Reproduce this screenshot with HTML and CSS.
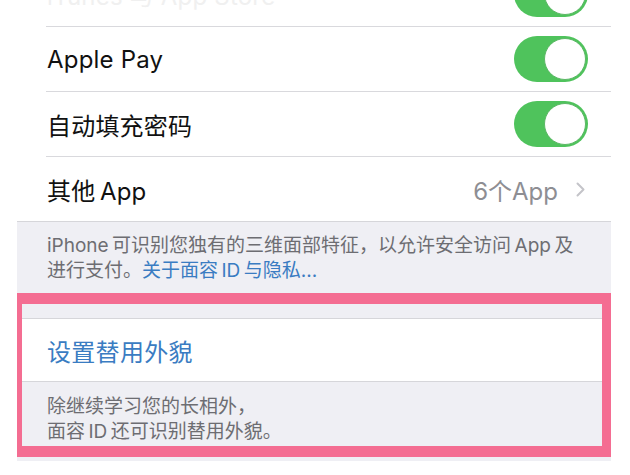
FILE: index.html
```html
<!DOCTYPE html>
<html lang="zh-CN">
<head>
    <meta charset="UTF-8">
    <meta name="viewport" content="width=device-width, initial-scale=1.0">
    <title>面容 ID 与密码</title>
    <link rel="stylesheet" href="styles.css">
</head>
<body>
    <div class="screen">
        <div class="group group-top">
            <div class="row">
                <div class="row-inner">
                    <span class="label faded">iTunes 与 App Store</span>
                    <span class="toggle"><span class="knob"></span></span>
                </div>
            </div>
            <div class="row">
                <div class="row-inner">
                    <span class="label">Apple Pay</span>
                    <span class="toggle"><span class="knob"></span></span>
                </div>
            </div>
            <div class="row">
                <div class="row-inner">
                    <span class="label">自动填充密码</span>
                    <span class="toggle"><span class="knob"></span></span>
                </div>
            </div>
            <div class="row">
                <div class="row-inner last">
                    <span class="label">其他&#8201;App</span>
                    <span class="value">6个App
                        <svg class="chevron" width="9" height="15" viewBox="0 0 9 15">
                            <polyline points="1.5,1.5 7.5,7.5 1.5,13.5" fill="none" stroke="#c4c4c9" stroke-width="2" stroke-linecap="round" stroke-linejoin="round"/>
                        </svg>
                    </span>
                </div>
            </div>
        </div>
        <p class="footer">iPhone&#8201;可识别您独有的三维面部特征，以允许安全访问&#8201;App&#8201;及进行支付。<a class="link" href="#">关于面容&#8201;ID&#8201;与隐私...</a></p>

        <div class="highlight">
            <div class="spacer"></div>
            <div class="group group-alt">
                <div class="row alt-row">
                    <span class="action">设置替用外貌</span>
                </div>
            </div>
            <p class="footer footer-alt">除继续学习您的长相外，<br>面容&#8201;ID&#8201;还可识别替用外貌。</p>
        </div>
        <div class="tail"></div>
    </div>
</body>
</html>
```

FILE: styles.css
```css
body {
    margin: 0;
    background-color: #ffffff;
    font-family: Inter, "Noto Sans CJK SC", sans-serif;
    overflow: hidden;
}

.screen {
    width: 594px;
    margin-left: 17px;
    background-color: #efeff4;
}

.group {
    background-color: #ffffff;
}

.group-top {
    margin-top: -38px;
    border-bottom: 1px solid #d6d6da;
}

.row {
    padding-left: 29px;
}

.row-inner {
    height: 64px;
    display: flex;
    align-items: center;
    justify-content: space-between;
    padding-left: 1px;
    padding-right: 23px;
    border-bottom: 1px solid #d9d9dd;
}

.row-inner.last {
    border-bottom: none;
    height: 64px;
    padding-right: 26px;
}

.label {
    font-size: 24px;
    color: #111111;
    letter-spacing: 0.2px;
}

.label.faded {
    color: #f0f0f0;
}

.value {
    display: flex;
    align-items: center;
    gap: 18px;
    font-size: 24px;
    color: #8e8e93;
}

.toggle {
    width: 74px;
    height: 46px;
    border-radius: 23px;
    background-color: #4fc35c;
    display: flex;
    align-items: center;
    justify-content: flex-end;
    padding-right: 2px;
    box-sizing: border-box;
}

.knob {
    width: 40px;
    height: 40px;
    border-radius: 50%;
    background-color: #ffffff;
    border: 1px solid #5cb866;
}

.footer {
    margin: 0;
    padding: 11px 30px 10px 30px;
    font-size: 19px;
    line-height: 25px;
    color: #6d6d72;
}

.link {
    color: #3a7cc2;
    text-decoration: none;
}

.highlight {
    border-style: solid;
    border-color: #f46d92;
    border-width: 11px 9px 11px 5px;
    background-color: #efeff4;
}

.spacer {
    height: 14px;
}

.group-alt {
    border-top: 1px solid #d6d6da;
    border-bottom: 1px solid #d6d6da;
}

.alt-row {
    height: 62px;
    display: flex;
    align-items: center;
    padding-left: 25px;
}

.action {
    font-size: 24px;
    color: #3a7cc2;
    letter-spacing: 0.3px;
}

.footer-alt {
    padding: 12px 25px 2px 25px;
}

.tail {
    height: 4px;
}
```
